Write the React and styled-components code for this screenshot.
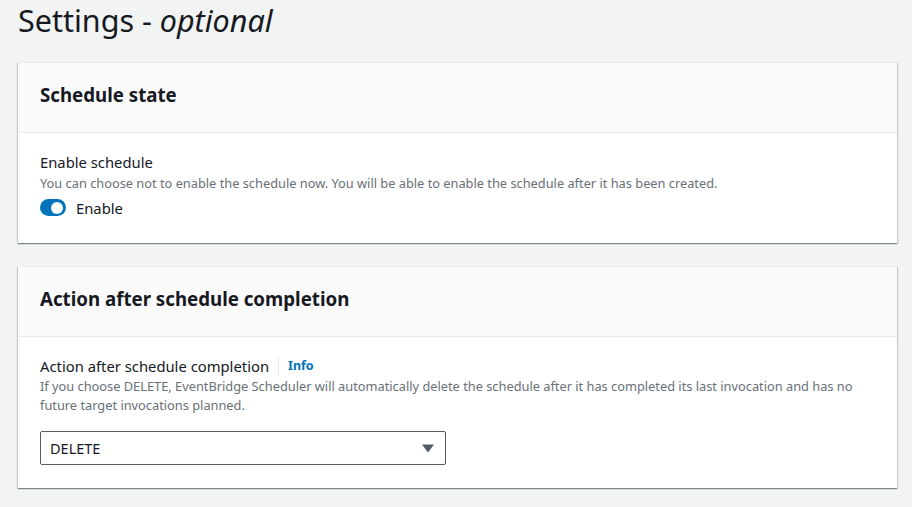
import React from "react";
import styled, { createGlobalStyle } from "styled-components";

const GlobalStyle = createGlobalStyle`
	html, body {
		margin: 0;
		padding: 0;
		background: #f2f3f3;
		font-family: "Noto Sans", "Open Sans", sans-serif;
		color: #16191f;
	}
`;

const Page = styled.div`
	padding: 0 15px 0 18px;
	width: 879px;
	box-sizing: content-box;
`;

const PageTitle = styled.h1`
	margin: 0;
	height: 62px;
	font-size: 30.5px;
	font-weight: 400;
	line-height: 40px;
	color: #16191f;

	em {
		font-style: italic;
		padding-right: 2px;
	}
`;

const Card = styled.section`
	background: #fff;
	border-top: 1px solid #eaeded;
	box-shadow:
		0 1px 1px 0 rgba(0, 28, 36, 0.3),
		1px 1px 1px 0 rgba(0, 28, 36, 0.15),
		-1px 1px 1px 0 rgba(0, 28, 36, 0.15);
	margin-bottom: 23px;
`;

const CardHeader = styled.header`
	background: #fafafa;
	border-bottom: 1px solid #eaeded;
	height: 70px;
	box-sizing: border-box;
	padding: 20px 22px 0;

	h2 {
		margin: 0;
		font-size: 18.7px;
		font-weight: 700;
		line-height: 24px;
	}
`;

const CardBody = styled.div`
	padding: ${(p) => p.$pad || "20px 22px 24px"};
`;

const Label = styled.div`
	display: flex;
	align-items: center;
	font-size: 14.8px;
	line-height: 20px;
	color: #16191f;
`;

const InfoLink = styled.span`
	margin-left: 9px;
	padding-left: 9px;
	border-left: 1px solid #eaeded;
	color: #0073bb;
	font-size: 12.5px;
	font-weight: 700;
	line-height: 20px;
`;

const Description = styled.p`
	margin: 1.5px 0 0;
	font-size: 12.8px;
	line-height: 19px;
	color: #687078;
`;

const ToggleRow = styled.label`
	display: flex;
	align-items: center;
	gap: 10px;
	margin-top: 5px;
	font-size: 14.8px;
	line-height: 20px;
`;

const Toggle = styled.span`
	position: relative;
	width: 26px;
	height: 17px;
	border-radius: 9px;
	background: #0073bb;

	&::after {
		content: "";
		position: absolute;
		top: 2.5px;
		right: 3px;
		width: 12px;
		height: 12px;
		border-radius: 50%;
		background: #fff;
	}
`;

const Select = styled.div`
	margin-top: 16px;
	width: 406px;
	height: 34px;
	box-sizing: border-box;
	border: 1px solid #545b64;
	border-radius: 2px;
	display: flex;
	align-items: center;
	justify-content: space-between;
	padding: 0 11px 0 9px;
	font-size: 14.5px;
	color: #16191f;
`;

const Caret = () => (
	<svg width="12" height="9" viewBox="0 0 12 9">
		<path d="M0 0.5h12L6 8.5z" fill="#545b64" />
	</svg>
);

export default function App() {
	return (
		<>
			<GlobalStyle />
			<Page>
				<PageTitle>
					Settings - <em>optional</em>
				</PageTitle>

				<Card>
					<CardHeader>
						<h2>Schedule state</h2>
					</CardHeader>
					<CardBody $pad="19px 22px 25px">
						<Label>Enable schedule</Label>
						<Description>
							You can choose not to enable the schedule now. You will be able to enable the
							schedule after it has been created.
						</Description>
						<ToggleRow>
							<Toggle />
							Enable
						</ToggleRow>
					</CardBody>
				</Card>

				<Card>
					<CardHeader>
						<h2>Action after schedule completion</h2>
					</CardHeader>
					<CardBody $pad="19px 22px 23px">
						<Label>
							Action after schedule completion
							<InfoLink>Info</InfoLink>
						</Label>
						<Description>
							If you choose DELETE, EventBridge Scheduler will automatically delete the schedule
							after it has completed its last invocation and has no future target invocations
							planned.
						</Description>
						<Select>
							<span>DELETE</span>
							<Caret />
						</Select>
					</CardBody>
				</Card>
			</Page>
		</>
	);
}
